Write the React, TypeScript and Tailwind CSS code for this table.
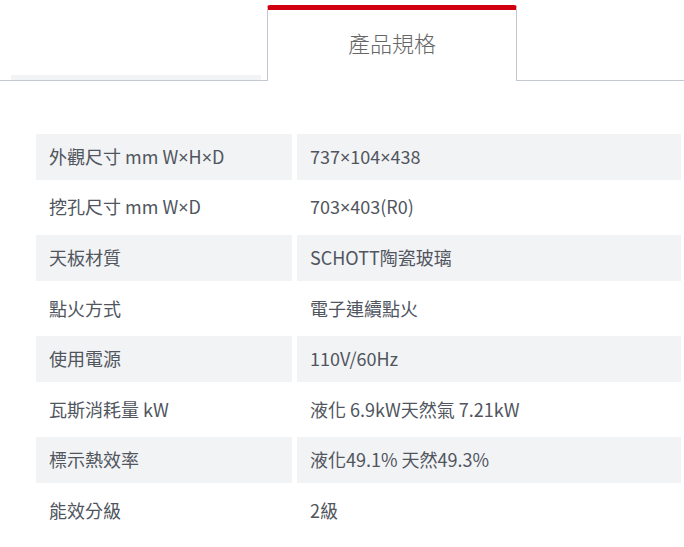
const specs: [string, string][] = [
  ["外觀尺寸 mm W×H×D", "737×104×438"],
  ["挖孔尺寸 mm W×D", "703×403(R0)"],
  ["天板材質", "SCHOTT陶瓷玻璃"],
  ["點火方式", "電子連續點火"],
  ["使用電源", "110V/60Hz"],
  ["瓦斯消耗量 kW", "液化 6.9kW天然氣 7.21kW"],
  ["標示熱效率", "液化49.1% 天然49.3%"],
  ["能效分級", "2級"],
];

// the CJK font draws × full width; the page shows a narrow one
function Txt({ s }: { s: string }) {
  const parts = s.split("×");
  return (
    <span>
      {parts.map((p, i) => (
        <span key={i}>
          {i > 0 && <span className="font-['Noto_Sans']">×</span>}
          {p}
        </span>
      ))}
    </span>
  );
}

export default function App() {
  return (
    <div
      className="w-[684px] h-[547px] bg-white overflow-hidden"
      style={{ fontFamily: '"Noto Sans CJK TC", "Noto Sans", sans-serif' }}
    >
      {/* tabs */}
      <div className="flex items-end pt-[5px]">
        <div className="w-[11px] shrink-0 border-b border-[#c4c8d0] h-[76px]" />
        <div className="w-[256px] shrink-0 h-[76px] flex flex-col justify-end border-b border-[#c4c8d0]">
          <div className="h-[5px] w-[250px] bg-[#f2f3f5]" />
        </div>
        <div className="w-[250px] shrink-0 h-[76px] rounded-t-[3px] border-t-[5px] border-t-[#d0000f] border-x border-x-[#c4c8d0] flex justify-center pt-[21px] text-[22px] text-[#666] font-light leading-none">
          產品規格
        </div>
        <div className="grow h-[76px] border-b border-[#c4c8d0]" />
      </div>

      {/* spec table */}
      <div className="pl-[36px] pt-[53px] flex flex-col gap-[5px]">
        {specs.map(([k, v], i) => (
          <div key={k} className="flex gap-[5px] h-[45.5px] text-[18px] text-[#50555e]">
            <div
              className={
                "w-[256px] flex items-center pl-[13px] " +
                (i % 2 === 0 ? "bg-[#f2f3f5]" : "bg-white")
              }
            >
              <Txt s={k} />
            </div>
            <div
              className={
                "w-[384px] flex items-center pl-[13px] " +
                (i % 2 === 0 ? "bg-[#f2f3f5]" : "bg-white")
              }
            >
              <Txt s={v} />
            </div>
          </div>
        ))}
      </div>
    </div>
  );
}
